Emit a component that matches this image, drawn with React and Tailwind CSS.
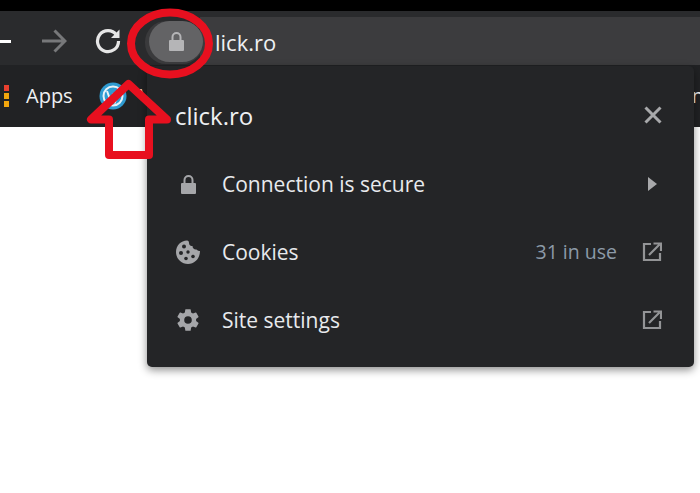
import React from "react";

const LockIcon = ({ className }) => (
  <svg viewBox="0 0 15 19" className={className} fill="currentColor">
    <rect x="0" y="8" width="15" height="11" rx="1" />
    <path d="M2.500 9V5a5 5 0 0 1 10 0v4h-2V5a3 3 0 0 0-6 0v4z" />
  </svg>
);

const CookieIcon = ({ className }) => (
  <svg viewBox="0 0 24 24" className={className}>
    <path
      fill="currentColor"
      d="M11 0.500C12.500 0.500 13 1.500 13 3c0 2.500 2 3 3.500 3 0 2.500 2 4 4 3.500 1 1.500 2.500 1.500 3.500 1.500 0 7-5 13-12 13S0 18.500 0 12 5 0.500 11 0.500z"
    />
    <circle cx="8" cy="6.500" r="2" fill="#242527" />
    <circle cx="5" cy="13" r="2" fill="#242527" />
    <circle cx="12" cy="12" r="1.700" fill="#242527" />
    <circle cx="10" cy="18.500" r="1.800" fill="#242527" />
    <circle cx="17" cy="16.500" r="1.800" fill="#242527" />
  </svg>
);

const GearIcon = ({ className }) => (
  <svg viewBox="0 0 24 24" className={className} fill="currentColor">
    <path d="M19.430 12.980c.04-.320.070-.640.070-.980s-.030-.660-.070-.980l2.110-1.650a.5.500 0 0 0 .120-.640l-2-3.460a.5.500 0 0 0-.610-.220l-2.490 1a7.300 7.300 0 0 0-1.690-.980l-.380-2.650A.49.490 0 0 0 14 2h-4a.49.490 0 0 0-.490.420l-.380 2.650c-.610.250-1.170.590-1.690.980l-2.490-1a.5.500 0 0 0-.610.220l-2 3.460a.49.490 0 0 0 .120.640l2.110 1.650c-.040.320-.070.650-.070.980s.030.660.070.980l-2.110 1.650a.5.500 0 0 0-.120.640l2 3.460c.120.220.390.300.610.220l2.490-1c.520.400 1.080.730 1.690.980l.380 2.650c.030.240.240.420.490.420h4c.250 0 .460-.180.490-.420l.380-2.650c.610-.250 1.170-.590 1.690-.980l2.490 1c.230.090.490 0 .610-.220l2-3.460a.5.500 0 0 0-.120-.640zM12 15.500a3.500 3.500 0 1 1 0-7 3.500 3.500 0 0 1 0 7z" />
  </svg>
);

const ExternalIcon = ({ className }) => (
  <svg viewBox="0 0 20 20" className={className} fill="none" stroke="currentColor" strokeWidth="2.200">
    <path d="M9 2H2v16h16v-7" />
    <path d="M7 13L17.500 2.500M11.500 1.500h7.500V9" />
  </svg>
);

const Row = ({ icon, label, right, children }) => (
  <div className="flex h-[68px] items-center pl-[28px] pr-[32px]">
    <div className="flex w-[47px] shrink-0 text-[#a5a6a9]">{icon}</div>
    <span className="flex-1 pt-[2px] text-[21px] text-[#e8eaed]">{label}</span>
    {right && <span className="mr-[25px] text-[19.500px] text-[#8c9aa8]">{right}</span>}
    {children}
  </div>
);

const App = () => {
  return (
    <div className="relative h-[493px] w-[700px] overflow-hidden bg-white font-['Open_Sans',sans-serif]">
      <div className="h-[11px] bg-black"></div>

      {/* toolbar */}
      <div className="flex h-[54px] bg-[#2a2b2d] pt-[6px]">
        <div className="flex h-full w-[200px] items-center">
          <div className="h-[3px] w-[11px] bg-white"></div>
          <svg viewBox="0 0 26 24" className="ml-[30px] h-[24px] w-[26px] text-[#77787a]" fill="none" stroke="currentColor" strokeWidth="3">
            <path d="M1 12h23M13.500 1.500L24 12 13.500 22.500" />
          </svg>
          <svg viewBox="0 0 26 26" className="ml-[28px] h-[26px] w-[26px] text-[#e6e6e6]" fill="none" stroke="currentColor" strokeWidth="3.200">
            <path d="M21.500 7A10.500 10.500 0 1 0 23.500 13" />
            <path d="M24.500 1.500v8.500h-8.500z" fill="currentColor" stroke="none" />
          </svg>
        </div>
        <div className="flex flex-1 items-center bg-[#3c3c3e] pt-[3px] text-[22px] text-[#eef0f2]">
          <span className="ml-[15px]">lick.ro</span>
        </div>
      </div>

      {/* bookmarks */}
      <div className="flex h-[62px] items-center bg-[#212224] text-[#eef0f2]">
        <div className="ml-[4px] flex flex-col gap-[2px]">
          <div className="h-[6px] w-[5px] bg-[#e8402f]"></div>
          <div className="h-[6px] w-[5px] bg-[#f2a60d]"></div>
          <div className="h-[6px] w-[5px] bg-[#f2a60d]"></div>
        </div>
        <span className="ml-[17px] text-[20px]">Apps</span>
        <svg viewBox="0 0 28 28" className="ml-[26px] h-[28px] w-[28px]">
          <circle cx="14" cy="14" r="13.500" fill="#2f9bd1" />
          <circle cx="14" cy="14" r="9.500" fill="none" stroke="#e8f2f8" strokeWidth="2" />
          <path d="M8 9l4 11 2-6 2 6 4-11" fill="none" stroke="#e8f2f8" strokeWidth="2" />
        </svg>
        <span className="ml-[13px] text-[20px]">V</span>
        <span className="ml-auto mr-[-4px] text-[20px]">n</span>
      </div>

      {/* site info popup */}
      <div className="absolute left-[147px] top-[66px] h-[301px] w-[547px] rounded-[5px] bg-[#242527] shadow-[0_3px_8px_rgba(0,0,0,0.45)]">
        <div className="flex h-[84px] items-center justify-between pl-[28px] pr-[32px] pt-[16px]">
          <span className="text-[24px] text-[#eef0f2]">click.ro</span>
          <svg viewBox="0 0 18 18" className="mb-[2px] h-[18px] w-[18px] text-[#a8a9ab]" fill="none" stroke="currentColor" strokeWidth="3">
            <path d="M1.500 1.500l15 15M16.500 1.500l-15 15" />
          </svg>
        </div>
        <Row icon={<LockIcon className="ml-[6px] h-[19px] w-[15px]" />} label="Connection is secure">
          <svg viewBox="0 0 9 14" className="mr-[5px] h-[14px] w-[9px] text-[#a8a9ab]" fill="currentColor">
            <path d="M0 0l9 7-9 7z" />
          </svg>
        </Row>
        <Row icon={<CookieIcon className="ml-[1px] h-[24px] w-[24px]" />} label="Cookies" right="31 in use">
          <ExternalIcon className="h-[20px] w-[20px] text-[#939496]" />
        </Row>
        <Row icon={<GearIcon className="h-[26px] w-[26px]" />} label="Site settings">
          <ExternalIcon className="h-[20px] w-[20px] text-[#939496]" />
        </Row>
      </div>

      {/* lock chip + red annotations */}
      <svg viewBox="0 0 700 493" className="pointer-events-none absolute left-0 top-0 h-[493px] w-[700px]">
        <rect x="145" y="21" width="58" height="43" rx="21" fill="#3a3a3c" />
        <rect x="149" y="21" width="54" height="41" rx="20.500" fill="#636365" />
        <g transform="translate(169,32)" fill="#b5b5b7">
          <rect x="0" y="8" width="15" height="11" rx="1" />
          <path d="M2.500 9V5a5 5 0 0 1 10 0v4h-2V5a3 3 0 0 0-6 0v4z" />
        </g>
        <ellipse cx="170" cy="43.500" rx="39" ry="31" fill="none" stroke="#e8101f" strokeWidth="8" />
        <path d="M128.500 84L91 119.500h18V155h40V119.500h18z" fill="none" stroke="#e8101f" strokeWidth="8" strokeLinejoin="round" />
      </svg>
    </div>
  );
};

export default App;
